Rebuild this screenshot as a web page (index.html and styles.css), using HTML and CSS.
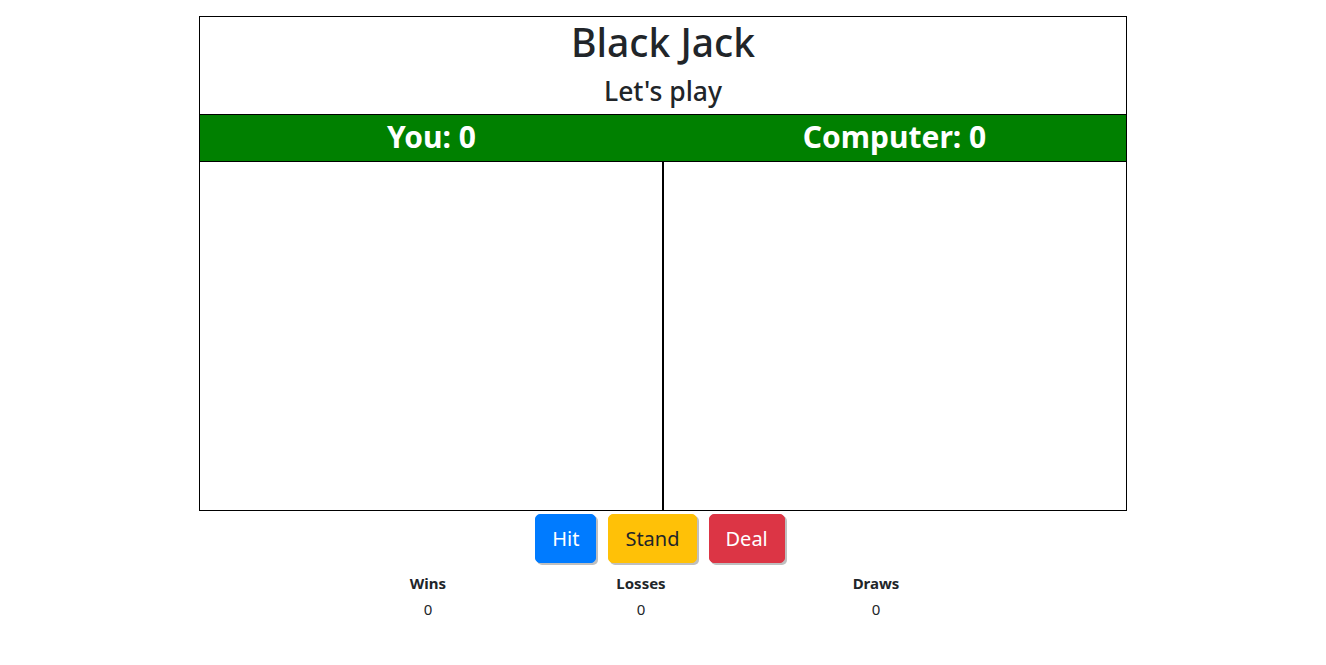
FILE: index.html
```html
<!DOCTYPE html>
<html>
<head>
<meta charset="utf-8">
<link rel="stylesheet" href="styles.css">
</head>
<body>
<div class="board">
  <div class="head">
    <h1 class="title">Black Jack</h1>
    <h3 class="subtitle">Let's play</h3>
  </div>
  <div class="scores">
    <div class="score">You: <span>0</span></div>
    <div class="score">Computer: <span>0</span></div>
  </div>
  <div class="areas">
    <div class="area area-you"></div>
    <div class="area area-cpu"></div>
  </div>
</div>
<div class="actions">
  <button class="btn btn-hit">Hit</button>
  <button class="btn btn-stand">Stand</button>
  <button class="btn btn-deal">Deal</button>
</div>
<div class="stats">
  <div class="stat-h">Wins</div>
  <div class="stat-h">Losses</div>
  <div class="stat-h">Draws</div>
  <div class="stat-v">0</div>
  <div class="stat-v">0</div>
  <div class="stat-v">0</div>
</div>
</body>
</html>
```
FILE: styles.css
```css
html, body {
  margin: 0;
  padding: 0;
  background: #fff;
  color: #212529;
  font-family: "Noto Sans", "Open Sans", sans-serif;
}
.board {
  width: 928px;
  box-sizing: border-box;
  margin: 16px auto 0;
  border: 1px solid #000;
}
.head {
  height: 97px;
  border-bottom: 1px solid #000;
  text-align: center;
  display: flex;
  flex-direction: column;
  align-items: center;
}
.title {
  margin: 1px 0 0;
  font-size: 39px;
  font-weight: 500;
  line-height: 48px;
}
.subtitle {
  margin: 8px 0 0;
  font-size: 26.5px;
  font-weight: 500;
  line-height: 34px;
}
.scores {
  display: flex;
  height: 46px;
  background: #008000;
  border-bottom: 1px solid #000;
}
.score {
  flex: 1;
  text-align: center;
  color: #fff;
  font-size: 30px;
  font-weight: 700;
  line-height: 43px;
}
.areas {
  display: flex;
  height: 348px;
}
.area {
  flex: 1;
}
.area-you { border-right: 1px solid #000; }
.area-cpu { border-left: 1px solid #000; }
.actions {
  display: flex;
  justify-content: center;
  gap: 12px;
  margin-top: 3px;
  padding-right: 6px;
}
.btn {
  font-family: inherit;
  font-size: 20px;
  line-height: 30px;
  padding: 9px 16px 8px;
  border: 1px solid transparent;
  border-radius: 5px;
  box-shadow: 2px 2px 0 rgba(0,0,0,0.25);
  cursor: pointer;
}
.btn-hit { background: #007bff; color: #fff; border-color: #007bff; }
.btn-stand { background: #ffc107; color: #212529; border-color: #ffc107; }
.btn-deal { background: #dc3545; color: #fff; border-color: #dc3545; }
.stats {
  display: grid;
  grid-template-columns: 213px 213px 257px;
  width: 683px;
  margin: 9px auto 0;
  text-align: center;
  font-size: 15px;
}
.stat-h {
  font-weight: 700;
  line-height: 22px;
}
.stat-v {
  line-height: 22px;
  margin-top: 4px;
}
```
